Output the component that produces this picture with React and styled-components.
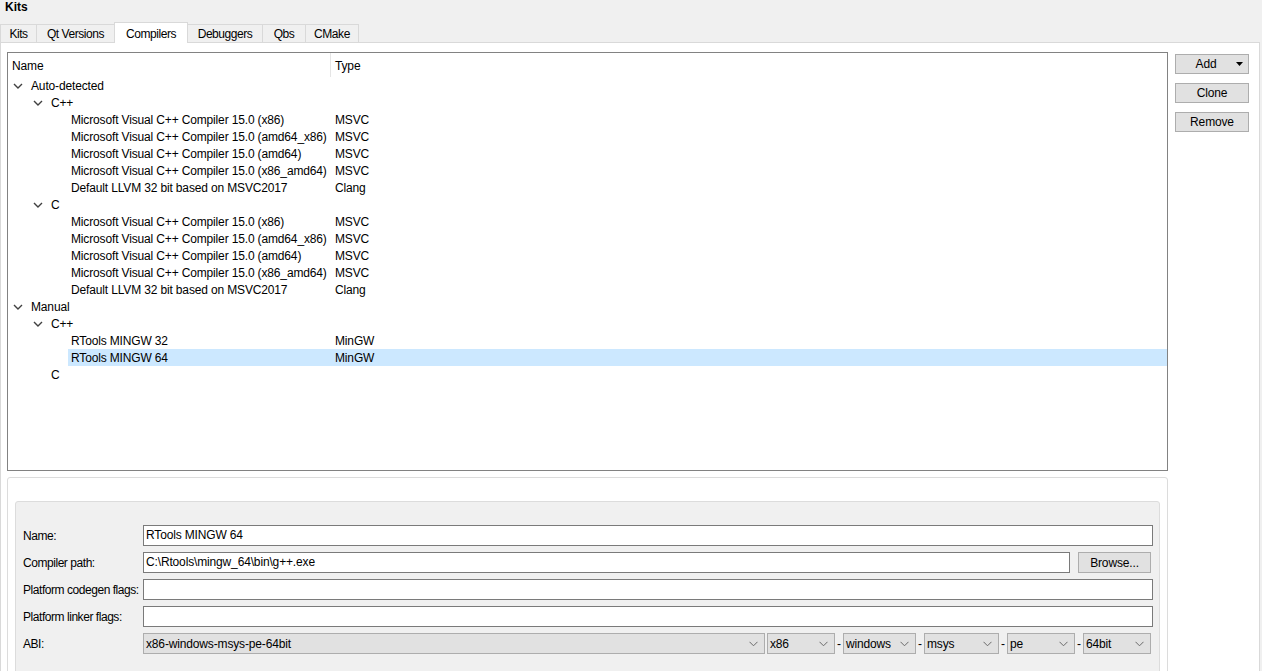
import React from 'react';
import styled, { createGlobalStyle } from 'styled-components';

const GlobalStyle = createGlobalStyle`
  html, body {
    margin: 0;
    padding: 0;
    overflow: hidden;
    background: #f0f0f0;
  }
  body {
    font-family: "Liberation Sans", Arial, sans-serif;
    font-size: 12px;
    letter-spacing: -0.15px;
    color: #000;
  }
`;

const Page = styled.div`
  width: 1262px;
  height: 671px;
  overflow: hidden;
`;

const Title = styled.div`
  height: 22px;
  padding: 0 5px;
  box-sizing: border-box;
  font-weight: bold;
  line-height: 14px;
  letter-spacing: 0;
`;

const TabBar = styled.div`
  display: flex;
  align-items: flex-end;
  height: 20px;
`;

const Tab = styled.div`
  position: relative;
  box-sizing: border-box;
  width: ${p => p.w}px;
  height: ${p => (p.active ? 21 : 18)}px;
  margin-bottom: ${p => (p.active ? -1 : 0)}px;
  margin-left: -1px;
  z-index: ${p => (p.active ? 2 : 1)};
  display: flex;
  align-items: center;
  justify-content: center;
  border: 1px solid #d9d9d9;
  border-bottom: none;
  background: ${p => (p.active ? '#fff' : '#f0f0f0')};
  padding-top: ${p => (p.active ? 1 : 0)}px;
  letter-spacing: -0.45px;

  &:first-child {
    margin-left: 0;
  }
`;

const Pane = styled.div`
  box-sizing: border-box;
  width: 1260px;
  height: 700px;
  background: #fff;
  border: 1px solid #d9d9d9;
  padding: 9px 0 0 6px;
`;

const TopArea = styled.div`
  display: flex;
  gap: 7px;
`;

const TreeView = styled.div`
  box-sizing: border-box;
  width: 1161px;
  height: 419px;
  border: 1px solid #828282;
  background: #fff;
`;

const Header = styled.div`
  display: flex;
  height: 24px;
  align-items: stretch;
`;

const HeadCell = styled.div`
  box-sizing: border-box;
  display: flex;
  align-items: center;
  padding: 2px 0 0 4px;
  width: ${p => (p.w ? `${p.w}px` : 'auto')};
  flex: ${p => (p.w ? 'none' : '1')};
  border-right: ${p => (p.w ? '1px solid #e5e5e5' : 'none')};
`;

const Row = styled.div`
  display: flex;
  height: 17px;
  padding-left: ${p => p.level * 20}px;
`;

const Toggle = styled.div`
  width: 20px;
  flex: none;
  display: flex;
  align-items: center;
  justify-content: center;
  padding-top: 1px;
`;

const RowContent = styled.div`
  flex: 1;
  display: flex;
  height: 17px;
  background: ${p => (p.selected ? '#cce8ff' : 'transparent')};
`;

const NameCell = styled.div`
  box-sizing: border-box;
  width: ${p => 303 - p.level * 20}px;
  padding-left: 3px;
  line-height: 19px;
  white-space: nowrap;
`;

const TypeCell = styled.div`
  padding-left: 4px;
  line-height: 19px;
`;

const SideButtons = styled.div`
  display: flex;
  flex-direction: column;
  gap: 9px;
  padding-top: 2px;
`;

const Button = styled.div`
  box-sizing: border-box;
  width: ${p => p.w || 74}px;
  height: ${p => p.h || 20}px;
  margin-right: ${p => p.mr || 0}px;
  background: #e1e1e1;
  border: 1px solid #adadad;
  display: flex;
  align-items: center;
  justify-content: center;
  flex: none;
`;

const MenuButton = styled(Button)`
  display: grid;
  grid-template-columns: 1fr auto;
  align-items: center;
  justify-items: center;
  padding-right: 5px;
`;

const GroupBox = styled.div`
  box-sizing: border-box;
  width: 1161px;
  margin-top: 6px;
  border: 1px solid #dcdcdc;
  border-radius: 3px;
  background: #fff;
  padding: 23px 7px 0;
  height: 240px;
`;

const InnerBox = styled.div`
  box-sizing: border-box;
  border: 1px solid #dcdcdc;
  border-radius: 3px;
  background: #f0f0f0;
  padding: 23px 6px 0 7px;
  height: 220px;
`;

const Form = styled.div`
  display: grid;
  grid-template-columns: 120px 1fr;
  grid-auto-rows: 21px;
  row-gap: 6px;
  align-items: center;
`;

const Label = styled.div`
  white-space: nowrap;
  letter-spacing: -0.45px;
`;

const Field = styled.div`
  display: flex;
  align-items: center;
  gap: ${p => p.gap || 0}px;
  height: 21px;
  padding-right: ${p => p.pr || 0}px;
`;

const TextInput = styled.div`
  box-sizing: border-box;
  flex: 1;
  height: 21px;
  border: 1px solid #7a7a7a;
  background: #fff;
  padding: 0 2px;
  line-height: 19px;
  white-space: nowrap;
`;

const Combo = styled.div`
  box-sizing: border-box;
  height: 21px;
  width: ${p => (p.w ? `${p.w}px` : 'auto')};
  flex: ${p => (p.w ? 'none' : '1')};
  border: 1px solid #adadad;
  background: #e1e1e1;
  display: flex;
  align-items: center;
  justify-content: space-between;
  padding: 0 6px 0 2px;
`;

const Dash = styled.span`
  flex: none;
  width: 4px;
  text-align: center;
`;

const Chevron = () => (
  <svg width="10" height="6" viewBox="0 0 10 6">
    <polyline points="1,1 5,5 9,1" fill="none" stroke="#404040" strokeWidth="1.4" />
  </svg>
);

const ComboArrow = () => (
  <svg width="9" height="6" viewBox="0 0 9 6">
    <polyline points="0.5,0.8 4.5,4.8 8.5,0.8" fill="none" stroke="#6a6a6a" strokeWidth="1" />
  </svg>
);

const DropTriangle = () => (
  <svg width="7" height="4" viewBox="0 0 7 4">
    <polygon points="0,0 7,0 3.5,4" fill="#000" />
  </svg>
);

const msvc = [
  ['Microsoft Visual C++ Compiler 15.0 (x86)', 'MSVC'],
  ['Microsoft Visual C++ Compiler 15.0 (amd64_x86)', 'MSVC'],
  ['Microsoft Visual C++ Compiler 15.0 (amd64)', 'MSVC'],
  ['Microsoft Visual C++ Compiler 15.0 (x86_amd64)', 'MSVC'],
  ['Default LLVM 32 bit based on MSVC2017', 'Clang'],
];

const rows = [
  { level: 0, name: 'Auto-detected', open: true },
  { level: 1, name: 'C++', open: true },
  ...msvc.map(([name, type]) => ({ level: 2, name, type })),
  { level: 1, name: 'C', open: true },
  ...msvc.map(([name, type]) => ({ level: 2, name, type })),
  { level: 0, name: 'Manual', open: true },
  { level: 1, name: 'C++', open: true },
  { level: 2, name: 'RTools MINGW 32', type: 'MinGW' },
  { level: 2, name: 'RTools MINGW 64', type: 'MinGW', selected: true },
  { level: 1, name: 'C' },
];

const tabs = [
  ['Kits', 37],
  ['Qt Versions', 79],
  ['Compilers', 74],
  ['Debuggers', 76],
  ['Qbs', 44],
  ['CMake', 54],
];

const abiParts = [
  ['x86', 68],
  ['windows', 73],
  ['msys', 75],
  ['pe', 68],
  ['64bit', 68],
];

export default function App() {
  return (
    <Page>
      <GlobalStyle />
      <Title>Kits</Title>
      <TabBar>
        {tabs.map(([label, w]) => (
          <Tab key={label} w={w} active={label === 'Compilers'}>{label}</Tab>
        ))}
      </TabBar>
      <Pane>
        <TopArea>
          <TreeView>
            <Header>
              <HeadCell w={323}>Name</HeadCell>
              <HeadCell>Type</HeadCell>
            </Header>
            {rows.map((r, i) => (
              <Row key={i} level={r.level}>
                <Toggle>{r.open ? <Chevron /> : null}</Toggle>
                <RowContent selected={r.selected}>
                  <NameCell level={r.level}>{r.name}</NameCell>
                  <TypeCell>{r.type}</TypeCell>
                </RowContent>
              </Row>
            ))}
          </TreeView>
          <SideButtons>
            <MenuButton>
              <span>Add</span>
              <DropTriangle />
            </MenuButton>
            <Button>Clone</Button>
            <Button>Remove</Button>
          </SideButtons>
        </TopArea>
        <GroupBox>
          <InnerBox>
            <Form>
              <Label>Name:</Label>
              <Field>
                <TextInput>RTools MINGW 64</TextInput>
              </Field>
              <Label>Compiler path:</Label>
              <Field gap={8}>
                <TextInput>C:\Rtools\mingw_64\bin\g++.exe</TextInput>
                <Button w={73} h={21} mr={2}>Browse...</Button>
              </Field>
              <Label>Platform codegen flags:</Label>
              <Field>
                <TextInput />
              </Field>
              <Label>Platform linker flags:</Label>
              <Field>
                <TextInput />
              </Field>
              <Label>ABI:</Label>
              <Field gap={2} pr={2}>
                <Combo>
                  <span>x86-windows-msys-pe-64bit</span>
                  <ComboArrow />
                </Combo>
                {abiParts.map(([label, w], i) => (
                  <React.Fragment key={label}>
                    {i > 0 && <Dash>-</Dash>}
                    <Combo w={w}>
                      <span>{label}</span>
                      <ComboArrow />
                    </Combo>
                  </React.Fragment>
                ))}
              </Field>
            </Form>
          </InnerBox>
        </GroupBox>
      </Pane>
    </Page>
  );
}
